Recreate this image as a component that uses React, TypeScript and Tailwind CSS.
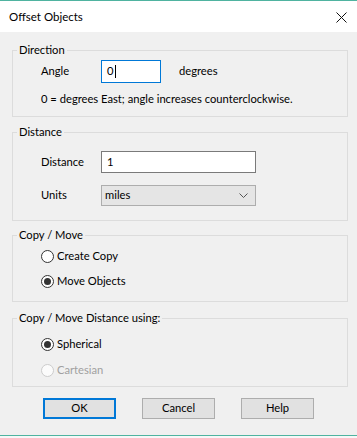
import React from "react";

const Radio = ({ checked, disabled, label }: { checked?: boolean; disabled?: boolean; label: string }) => (
  <label className={`flex items-center h-[16px] gap-[3px] ${disabled ? "text-[#a0a0a0]" : "text-black"}`}>
    <span
      className={`w-[13px] h-[13px] rounded-full border flex items-center justify-center ${
        disabled ? "border-[#cccccc] bg-[#fbfbfb]" : "border-[#333333] bg-white"
      }`}
    >
      {checked && <span className="w-[7px] h-[7px] rounded-full bg-[#333333]" />}
    </span>
    {label}
  </label>
);

const Group = ({ title, className, children }: { title: string; className: string; children: React.ReactNode }) => (
  <fieldset className={`ml-[12px] mr-[9px] border border-[#dcdcdc] ${className}`}>
    <legend className="ml-[4px] px-[2px] h-[16px] leading-[16px]">{title}</legend>
    {children}
  </fieldset>
);

export default function App() {
  return (
    <div
      className="w-[357px] h-[438px] flex flex-col bg-[#f0f0f0] text-[11.2px] text-black overflow-hidden"
      style={{ fontFamily: 'Lato, "Liberation Sans", sans-serif' }}
    >
      <div className="h-[1px] bg-[#4fb3a0]" />
      {/* Title bar */}
      <div className="h-[31px] bg-white flex items-center justify-between pl-[9px] pr-[10px]">
        <span className="text-[11.5px]">Offset Objects</span>
        <svg width="11" height="11" viewBox="0 0 11 11" className="mt-[1px]">
          <path d="M0.5 0.5 L10.5 10.5 M10.5 0.5 L0.5 10.5" stroke="#111" strokeWidth="1" />
        </svg>
      </div>

      {/* Direction */}
      <Group title="Direction" className="mt-[10px] pb-[9px]">
        <div className="flex items-center pt-[2px] pl-[28px]">
          <span className="w-[60px]">Angle</span>
          <div className="w-[60px] h-[23px] border border-[#0078d7] bg-white flex items-center pl-[5px]">
            0<span className="w-[1px] h-[13px] bg-black ml-[1px]" />
          </div>
          <span className="ml-[18px]">degrees</span>
        </div>
        <div className="pl-[28px] mt-[8px] leading-[16px]">0 = degrees East; angle increases counterclockwise.</div>
      </Group>

      {/* Distance */}
      <Group title="Distance" className="mt-[7px] pb-[14px]">
        <div className="flex flex-col gap-[12px] pt-[11px] pl-[28px]">
          <div className="flex items-center">
            <span className="w-[60px]">Distance</span>
            <div className="w-[155px] h-[22px] border border-[#7a7a7a] bg-white flex items-center pl-[5px]">1</div>
          </div>
          <div className="flex items-center">
            <span className="w-[60px]">Units</span>
            <div className="w-[155px] h-[21px] border border-[#adadad] bg-[#e5e5e5] flex items-center justify-between pl-[3px] pr-[7px]">
              <span>miles</span>
              <svg width="9" height="5" viewBox="0 0 9 5">
                <path d="M0.5 0.5 L4.5 4.5 L8.5 0.5" stroke="#555" strokeWidth="1" fill="none" />
              </svg>
            </div>
          </div>
        </div>
      </Group>

      {/* Copy / Move */}
      <Group title="Copy / Move" className="mt-[6px] pb-[12px]">
        <div className="flex flex-col gap-[9px] pt-[5px] pl-[28px]">
          <Radio label="Create Copy" />
          <Radio label="Move Objects" checked />
        </div>
      </Group>

      {/* Copy / Move Distance using */}
      <Group title="Copy / Move Distance using:" className="mt-[8px] pb-[8px]">
        <div className="flex flex-col gap-[10px] pt-[10px] pl-[28px]">
          <Radio label="Spherical" checked />
          <Radio label="Cartesian" disabled />
        </div>
      </Group>

      {/* Buttons */}
      <div className="flex gap-[26px] pl-[43px] mt-[11px]">
        <button className="w-[73px] h-[21px] border-2 border-[#0078d7] bg-[#e1e1e1]">OK</button>
        <button className="w-[73px] h-[21px] border border-[#adadad] bg-[#e1e1e1]">Cancel</button>
        <button className="w-[73px] h-[21px] border border-[#adadad] bg-[#e1e1e1]">Help</button>
      </div>

      <div className="flex-1" />
      <div className="h-[1px] bg-[#4fb3a0]" />
      <div className="h-[2px] bg-[#f7f7f7]" />
    </div>
  );
}
